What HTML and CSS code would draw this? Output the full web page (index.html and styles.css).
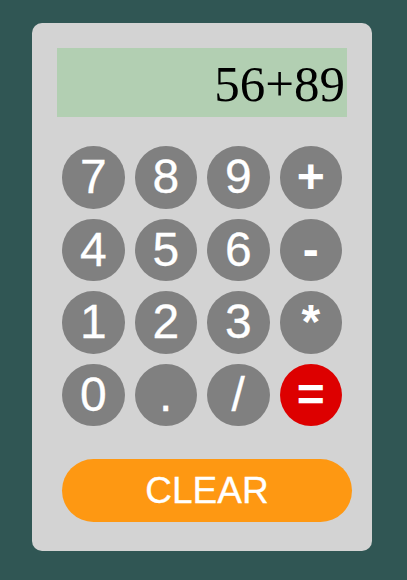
FILE: index.html
```html
<!DOCTYPE html>
<html>
<head>
<meta charset="utf-8">
<link rel="stylesheet" href="styles.css">
</head>
<body>
<div class="calc">
  <div class="display">56+89</div>
  <div class="keys">
    <div class="key">7</div><div class="key">8</div><div class="key">9</div><div class="key op">+</div>
    <div class="key">4</div><div class="key">5</div><div class="key">6</div><div class="key op">-</div>
    <div class="key">1</div><div class="key">2</div><div class="key">3</div><div class="key op">*</div>
    <div class="key">0</div><div class="key">.</div><div class="key">/</div><div class="key op eq">=</div>
  </div>
  <div class="clear">CLEAR</div>
</div>
</body>
</html>
```
FILE: styles.css
```css
html, body { margin: 0; padding: 0; }
body {
  background: #305654;
  width: 407px;
  height: 580px;
  overflow: hidden;
  font-family: "Liberation Sans", Arial, sans-serif;
}
.calc {
  box-sizing: border-box;
  margin: 23px 0 0 32px;
  width: 340px;
  height: 528px;
  background: #d3d3d3;
  border-radius: 10px;
  padding: 25px;
}
.display {
  height: 69px;
  background: #b2cfb2;
  font-family: "Liberation Serif", "Times New Roman", serif;
  font-size: 51px;
  line-height: 72px;
  text-align: right;
  padding-right: 2px;
  color: #000;
  overflow: hidden;
}
.keys {
  display: grid;
  grid-template-columns: repeat(4, 1fr);
  grid-auto-rows: 62.5px;
  gap: 10px;
  padding: 0 5px;
  margin-top: 29px;
}
.key {
  background: #808080;
  border-radius: 50%;
  color: #fff;
  font-size: 48px;
  display: flex;
  align-items: center;
  justify-content: center;
  line-height: 1;
  -webkit-text-stroke: 0.3px #fff;
}
.key.op {
  font-weight: bold;
  -webkit-text-stroke: 0;
}
.key.eq { background: #dd0000; }
.clear {
  margin: 33px 0 0 5px;
  width: 290px;
  height: 63px;
  border-radius: 32px;
  background: #fe9812;
  color: #fff;
  font-size: 37px;
  display: flex;
  align-items: center;
  justify-content: center;
  -webkit-text-stroke: 0.3px #fff;
}
```
